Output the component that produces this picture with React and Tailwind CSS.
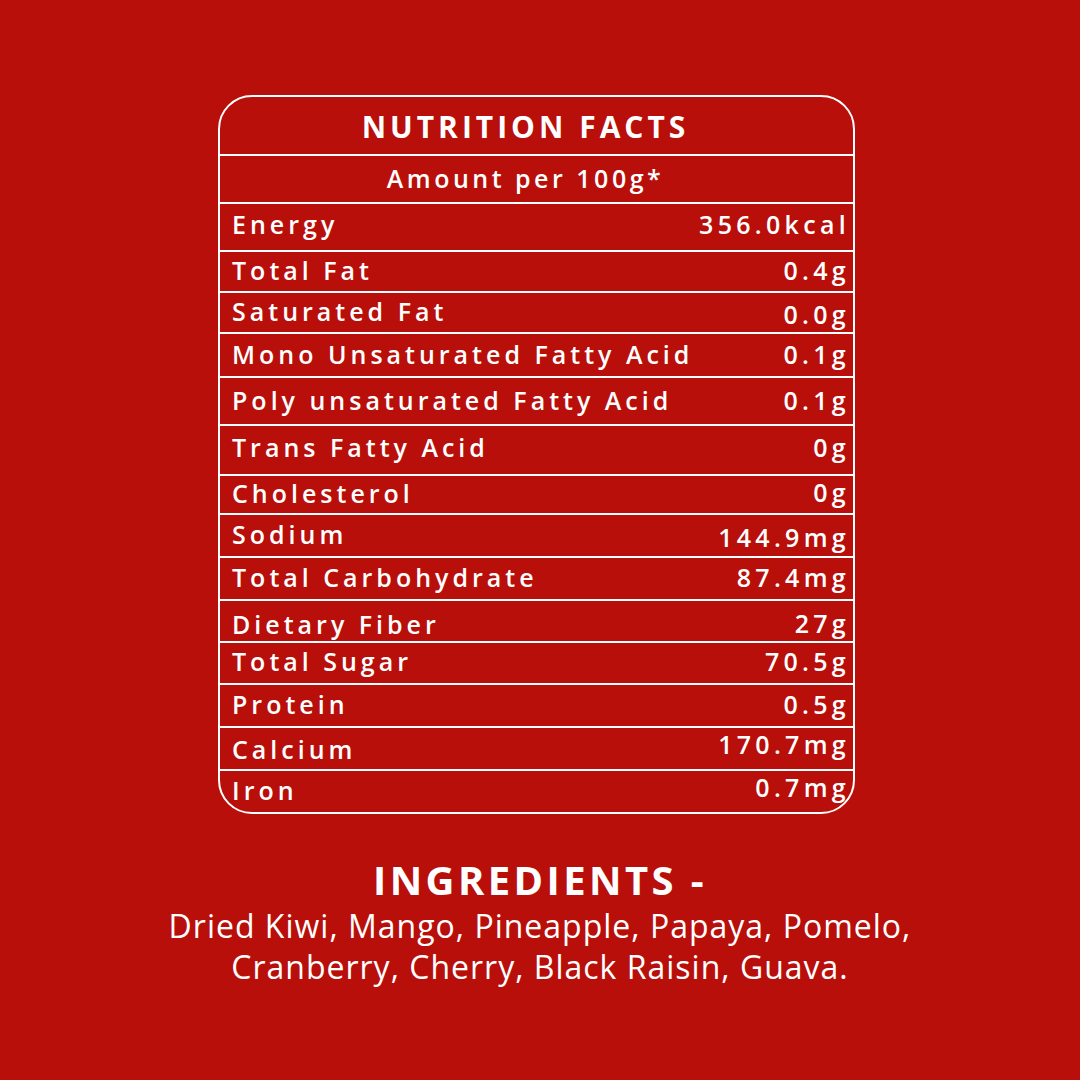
const rows = [
  { label: "Energy", value: "356.0kcal", h: "h-[48px] pb-[4px]" },
  { label: "Total Fat", value: "0.4g", h: "h-[41px]" },
  { label: "Saturated Fat", value: "0.0g", h: "h-[41px]", vc: "pt-[5px]" },
  { label: "Mono Unsaturated Fatty Acid", value: "0.1g", h: "h-[44px]" },
  { label: "Poly unsaturated Fatty Acid", value: "0.1g", h: "h-[48px]" },
  { label: "Trans Fatty Acid", value: "0g", h: "h-[50px] pb-[4px]" },
  { label: "Cholesterol", value: "0g", h: "h-[39px]", vc: "pb-[3px]" },
  { label: "Sodium", value: "144.9mg", h: "h-[43px]", vc: "pt-[5px]" },
  { label: "Total Carbohydrate", value: "87.4mg", h: "h-[43px]" },
  { label: "Dietary Fiber", value: "27g", h: "h-[42px]", lc: "pt-[8px]", vc: "pt-[6px]" },
  { label: "Total Sugar", value: "70.5g", h: "h-[42px] pb-[3px]" },
  { label: "Protein", value: "0.5g", h: "h-[43px]" },
  { label: "Calcium", value: "170.7mg", h: "h-[43px]", lc: "pt-[3px]", vc: "pb-[7px]" },
  { label: "Iron", value: "0.7mg", h: "h-[43px]", vc: "pb-[6px]" },
];

function Row({ label, value, h, lc = "", vc = "" }) {
  return (
    <div className={`flex justify-between items-center border-t-2 border-white pl-[12px] pr-[3px] ${h.includes("pb-") ? "" : "pb-[1px]"} ${h}`}>
      <span className={`text-[25px] font-semibold tracking-[4px] ${lc}`}>{label}</span>
      <span className={`text-[25px] font-semibold tracking-[4.3px] ${vc}`}>{value}</span>
    </div>
  );
}

export default function App() {
  return (
    <div
      className="w-[1080px] h-[1080px] bg-[#b80f0a] text-white pt-[95px]"
      style={{ fontFamily: '"Open Sans", "Liberation Sans", sans-serif' }}
    >
      <div className="ml-[218px] w-[637px] border-2 border-white rounded-[34px] overflow-hidden">
        <div className="h-[57px] flex items-center justify-center pr-[22px] pt-[2px]">
          <h1 className="text-[30px] font-bold tracking-[4px] leading-none">NUTRITION FACTS</h1>
        </div>
        <div className="h-[48px] flex items-center justify-center border-t-2 border-white pr-[22px]">
          <span className="text-[25px] font-semibold tracking-[3.5px]">Amount per 100g*</span>
        </div>
        {rows.map((r) => (
          <Row key={r.label} {...r} />
        ))}
      </div>

      <div className="mt-[43px] flex flex-col items-center">
        <h2 className="text-[40px] font-bold tracking-[3.4px] leading-[46px]">INGREDIENTS -</h2>
        <p className="text-[32px] leading-[41px] text-center tracking-[1px] mt-[2px]">
          Dried Kiwi, Mango, Pineapple, Papaya, Pomelo,
          <br />
          Cranberry, Cherry, Black Raisin, Guava.
        </p>
      </div>
    </div>
  );
}
